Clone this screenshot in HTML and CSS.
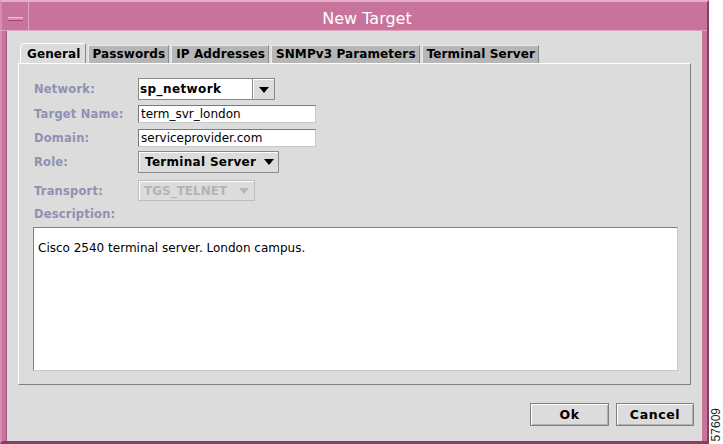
FILE: index.html
```html
<!DOCTYPE html>
<html lang="en">
<head>
    <meta charset="UTF-8">
    <title>New Target</title>
    <link rel="stylesheet" href="styles.css">
</head>
<body>
    <div class="page">
        <div class="window">
            <div class="titlebar">
                <div class="min-btn"><span class="min-bar"></span></div>
                <div class="title">New Target</div>
            </div>
            <div class="content">
                <div class="tabs">
                    <div class="tab selected">General</div>
                    <div class="tab">Passwords</div>
                    <div class="tab">IP Addresses</div>
                    <div class="tab">SNMPv3 Parameters</div>
                    <div class="tab">Terminal Server</div>
                </div>
                <div class="panel">
                    <div class="row r-network">
                        <label>Network:</label>
                        <div class="combo editable">
                            <span class="combo-text">sp_network</span>
                            <span class="combo-btn"><span class="arrow"></span></span>
                        </div>
                    </div>
                    <div class="row r-name">
                        <label>Target Name:</label>
                        <input class="field" type="text" value="term_svr_london">
                    </div>
                    <div class="row r-domain">
                        <label>Domain:</label>
                        <input class="field" type="text" value="serviceprovider.com">
                    </div>
                    <div class="row r-role">
                        <label>Role:</label>
                        <div class="combo plain">
                            <span class="combo-text">Terminal Server</span>
                            <span class="arrow"></span>
                        </div>
                    </div>
                    <div class="row r-transport">
                        <label>Transport:</label>
                        <div class="combo plain disabled">
                            <span class="combo-text">TGS_TELNET</span>
                            <span class="arrow"></span>
                        </div>
                    </div>
                    <div class="row r-desc">
                        <label>Description:</label>
                    </div>
                    <div class="textarea">Cisco 2540 terminal server. London campus.</div>
                </div>
                <div class="actions">
                    <button class="btn ok">Ok</button>
                    <button class="btn cancel">Cancel</button>
                </div>
            </div>
        </div>
        <div class="side"><span class="fig">57609</span></div>
    </div>
</body>
</html>
```

FILE: styles.css
```css
body {
    margin: 0;
    background: #fff;
    font-family: "DejaVu Sans", sans-serif;
}
.page {
    display: flex;
    width: 723px;
    height: 444px;
}
.window {
    width: 710px;
    height: 444px;
    box-sizing: border-box;
    background: #c8739b;
    border-top: 2px solid #e4b0c8;
    border-left: 2px solid #d58fb0;
    border-right: 2px solid #8a3d63;
    border-bottom: 3px solid #8a3d63;
    display: flex;
    flex-direction: column;
}
.titlebar {
    height: 28px;
    display: flex;
    border-bottom: 1px solid #e0a4c0;
    margin-left: -2px;
}
.min-btn {
    width: 29px;
    border-right: 1px solid #e0a4c0;
    display: flex;
    align-items: center;
    justify-content: center;
    padding: 6px 0 0 3px;
    box-sizing: border-box;
}
.min-bar {
    width: 15px;
    height: 2px;
    background: #d98db0;
    border-top: 1px solid #f0c4d8;
    border-bottom: 1px solid #9a4a70;
}
.title {
    flex: 1;
    text-align: center;
    color: #fff;
    font-size: 16px;
    line-height: 34px;
    padding-right: 2px;
}
.content {
    margin: 0 5px 0 4px;
    border-left: 1px solid #a85580;
    flex: 1;
    background: #dcdcdc;
    padding: 12px 0 0 11px;
    display: flex;
    flex-direction: column;
}
.tabs {
    display: flex;
    align-items: flex-end;
    height: 20px;
    padding-left: 2px;
}
.tab {
    height: 17px;
    line-height: 17px;
    padding: 0 3px 0 4px;
    margin-right: 2px;
    font-size: 12px;
    font-weight: bold;
    letter-spacing: 0.1px;
    background: #b6b6b6;
    border-top: 1px solid #e8e8e8;
    border-left: 1px solid #e8e8e8;
    border-right: 1px solid #8a8a8a;
}
.tab.selected {
    height: 19px;
    line-height: 21px;
    background: #dcdcdc;
    border-top: 1px solid #fff;
    border-left: 1px solid #fff;
    border-top-left-radius: 5px;
    padding: 0 4px 0 6px;
}
.panel {
    width: 673px;
    height: 322px;
    box-sizing: border-box;
    border-top: 1px solid #fff;
    border-left: 1px solid #fff;
    border-right: 1px solid #808080;
    border-bottom: 1px solid #808080;
    padding: 14px 0 0 14px;
}
.row {
    display: flex;
    align-items: center;
}
.row label {
    width: 104px;
    flex: none;
    color: #9090b2;
    font-size: 11.5px;
    font-weight: bold;
    letter-spacing: 0.2px;
    padding-left: 1px;
}
.r-network { height: 22px; }
.r-name { height: 18px; margin-top: 5px; }
.r-domain { height: 18px; margin-top: 6px; }
.r-role { height: 22px; margin-top: 4px; }
.r-transport { height: 21px; margin-top: 7px; }
.r-desc { height: 14px; margin-top: 6px; }
.field {
    width: 178px;
    height: 18px;
    box-sizing: border-box;
    margin: 0;
    padding: 0 2px;
    border: 1px solid #7a7a7a;
    border-right-color: #c8c8c8;
    border-bottom-color: #c8c8c8;
    background: #fff;
    font-family: "DejaVu Sans", sans-serif;
    font-size: 12px;
    color: #000;
}
.combo {
    display: flex;
    align-items: center;
    height: 22px;
    box-sizing: border-box;
    font-size: 12px;
    font-weight: bold;
}
.combo.editable {
    width: 137px;
    border: 1px solid #8a8a8a;
    background: #fff;
}
.combo.editable .combo-text {
    flex: 1;
    padding-left: 1px;
    border-right: 1px solid #8a8a8a;
    height: 100%;
    line-height: 20px;
    letter-spacing: 0.4px;
}
.combo-btn {
    width: 21px;
    height: 100%;
    background: #dcdcdc;
    display: flex;
    align-items: center;
    justify-content: center;
    border-top: 1px solid #fff;
    border-left: 1px solid #fff;
    box-sizing: border-box;
}
.arrow {
    width: 0;
    height: 0;
    border-left: 5px solid transparent;
    border-right: 5px solid transparent;
    border-top: 6px solid #000;
}
.combo.plain {
    width: 141px;
    background: #dcdcdc;
    border: 1px solid #8a8a8a;
    box-shadow: inset 1px 1px 0 #fff;
    padding: 0 4px 0 6px;
    justify-content: space-between;
}
.combo.plain .combo-text {
    letter-spacing: 0.3px;
}
.combo.disabled {
    width: 117px;
    height: 21px;
    border-color: #bdbdbd;
    color: #b4b4b4;
    padding-left: 5px;
    padding-right: 5px;
}
.combo.disabled .combo-text {
    letter-spacing: 0;
}
.combo.disabled .arrow {
    border-top-color: #b8b8b8;
}
.textarea {
    margin-top: 6px;
    width: 645px;
    height: 144px;
    box-sizing: border-box;
    background: #fff;
    border: 1px solid #808080;
    border-right-color: #c8c8c8;
    border-bottom-color: #c8c8c8;
    padding: 13px 4px;
    font-size: 12px;
}
.actions {
    display: flex;
    justify-content: flex-end;
    gap: 7px;
    margin-top: 18px;
    padding-right: 8px;
}
.btn {
    width: 79px;
    height: 23px;
    background: #dcdcdc;
    border: 1px solid #808080;
    box-shadow: inset 1px 1px 0 #fff, inset -1px -1px 0 #b0b0b0;
    font-family: "DejaVu Sans", sans-serif;
    font-size: 12.5px;
    font-weight: bold;
    letter-spacing: 0.6px;
    padding: 0;
}
.btn.cancel {
    width: 78px;
}
.side {
    flex: 1;
    display: flex;
    align-items: flex-end;
    justify-content: flex-start;
    padding-bottom: 3px;
}
.fig {
    writing-mode: vertical-rl;
    transform: rotate(180deg);
    font-family: "Liberation Sans", sans-serif;
    font-size: 12px;
    color: #222;
}
```
